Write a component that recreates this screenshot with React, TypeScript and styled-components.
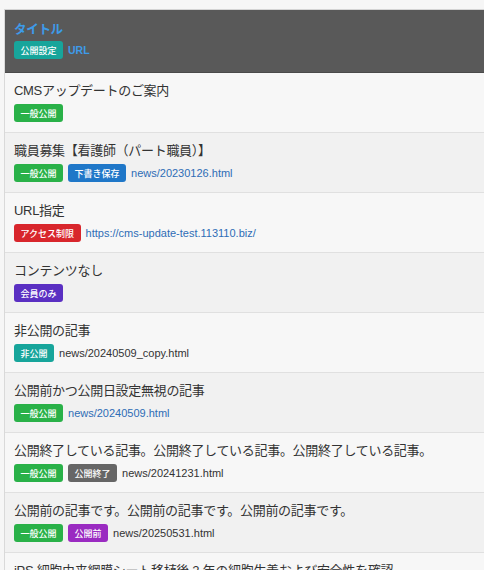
import styled, {createGlobalStyle} from 'styled-components';

const GlobalStyle = createGlobalStyle`
  html, body {
    margin: 0;
    padding: 0;
    overflow: hidden;
    background: #f6f6f6;
    font-family: "Liberation Sans", "Noto Sans CJK JP", sans-serif;
    color: #333;
  }
`;

type Tone = 'green' | 'blue' | 'red' | 'purple' | 'teal' | 'gray' | 'violet';

const toneColors: Record<Tone, string> = {
  green: '#29b148',
  blue: '#1f77c8',
  red: '#d8262c',
  purple: '#5a2fc2',
  teal: '#17a59b',
  gray: '#666666',
  violet: '#9a2bc1',
};

interface Badge {
  label: string;
  tone: Tone;
}

interface Article {
  title: string;
  badges: Badge[];
  path?: string;
  linked?: boolean;
}

const articles: Article[] = [
  {title: 'CMSアップデートのご案内', badges: [{label: '一般公開', tone: 'green'}]},
  {
    title: '職員募集【看護師（パート職員）】',
    badges: [{label: '一般公開', tone: 'green'}, {label: '下書き保存', tone: 'blue'}],
    path: 'news/20230126.html',
    linked: true,
  },
  {
    title: 'URL指定',
    badges: [{label: 'アクセス制限', tone: 'red'}],
    path: 'https://cms-update-test.113110.biz/',
    linked: true,
  },
  {title: 'コンテンツなし', badges: [{label: '会員のみ', tone: 'purple'}]},
  {title: '非公開の記事', badges: [{label: '非公開', tone: 'teal'}], path: 'news/20240509_copy.html'},
  {
    title: '公開前かつ公開日設定無視の記事',
    badges: [{label: '一般公開', tone: 'green'}],
    path: 'news/20240509.html',
    linked: true,
  },
  {
    title: '公開終了している記事。公開終了している記事。公開終了している記事。',
    badges: [{label: '一般公開', tone: 'green'}, {label: '公開終了', tone: 'gray'}],
    path: 'news/20241231.html',
  },
  {
    title: '公開前の記事です。公開前の記事です。公開前の記事です。',
    badges: [{label: '一般公開', tone: 'green'}, {label: '公開前', tone: 'violet'}],
    path: 'news/20250531.html',
  },
  {
    title: 'iPS 細胞由来網膜シート移植後 2 年の細胞生着および安全性を確認',
    badges: [{label: '一般公開', tone: 'green'}],
  },
];

const Page = styled.div`
  padding: 9px 0 0 4px;
`;

const Panel = styled.div`
  margin-right: -12px;
  border-top: 1px solid #d4d4d4;
  border-left: 1px solid #d9d9d9;
`;

const Header = styled.div`
  background: #595959;
  padding: 10px 10px 13px 9px;
  display: flex;
  flex-direction: column;
  gap: 1px;
  border-bottom: 1px solid #4a4a4a;
`;

const HeaderTitle = styled.div`
  font-size: 12.5px;
  font-weight: 700;
  line-height: 20px;
  color: #3d9be9;
  letter-spacing: -0.3px;
`;

const Row = styled.div<{ $shade: boolean }>`
  background: ${p => (p.$shade ? '#f1f1f1' : '#f7f7f7')};
  border-bottom: 1px solid #e0e0e0;
  padding: 8px 10px 10px 9px;
  display: flex;
  flex-direction: column;
  gap: 3px;
`;

const Title = styled.div`
  font-size: 13px;
  line-height: 20px;
  letter-spacing: -0.3px;
  white-space: nowrap;
  color: #333;
`;

const Meta = styled.div`
  display: flex;
  align-items: center;
  gap: 5px;
  height: 18px;
`;

const Tag = styled.span<{ $tone: Tone }>`
  display: inline-flex;
  align-items: center;
  height: 18px;
  padding: 0 6.5px;
  border-radius: 3px;
  background: ${p => toneColors[p.$tone]};
  color: #fff;
  font-family: "Noto Sans CJK JP", sans-serif;
  font-size: 9px;
  font-weight: 500;
  white-space: nowrap;
`;

const Path = styled.span<{ $linked?: boolean }>`
  font-size: 11px;
  color: ${p => (p.$linked ? '#2e6db6' : '#333')};
  white-space: nowrap;
`;

const HeaderUrl = styled.span`
  font-size: 10.5px;
  font-weight: 700;
  color: #3d9be9;
`;

export default function App() {
  return (
    <>
      <GlobalStyle/>
      <Page>
        <Panel>
          <Header>
            <HeaderTitle>タイトル</HeaderTitle>
            <Meta>
              <Tag $tone='teal'>公開設定</Tag>
              <HeaderUrl>URL</HeaderUrl>
            </Meta>
          </Header>
          {articles.map((article, idx) => (
            <Row key={`article-${idx}`} $shade={idx % 2 === 1}>
              <Title>{article.title}</Title>
              <Meta>
                {article.badges.map((badge, bIdx) => (
                  <Tag key={`badge-${idx}-${bIdx}`} $tone={badge.tone}>{badge.label}</Tag>
                ))}
                {article.path && <Path $linked={article.linked}>{article.path}</Path>}
              </Meta>
            </Row>
          ))}
        </Panel>
      </Page>
    </>
  );
}
